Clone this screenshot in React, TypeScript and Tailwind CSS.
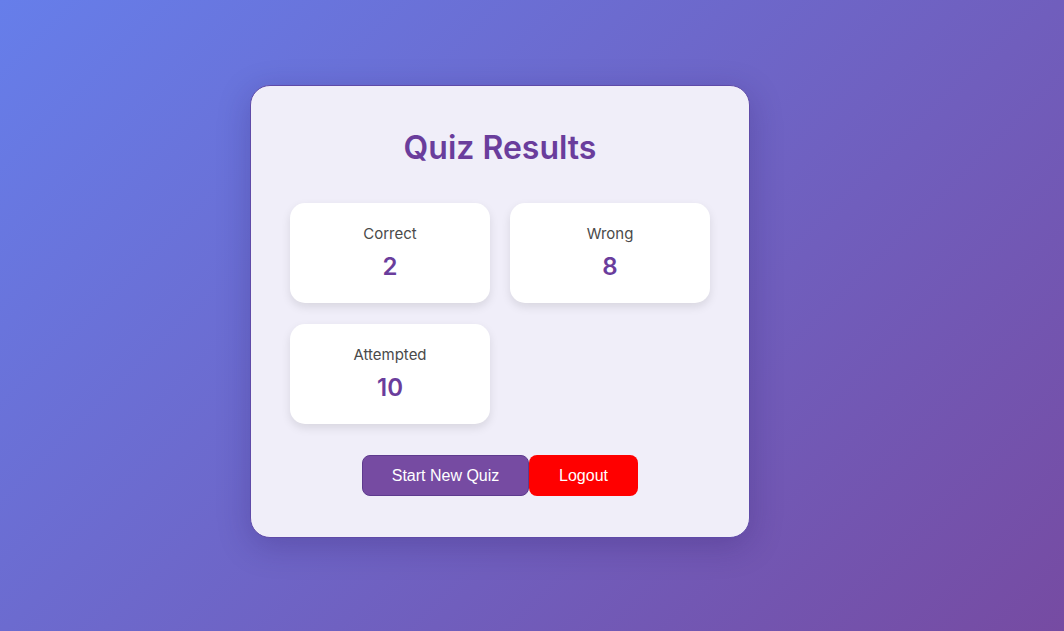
import React from "react";

const stats = [
  { label: "Correct", value: 2 },
  { label: "Wrong", value: 8 },
  { label: "Attempted", value: 10 },
];

export default function App() {
  return (
    <div className="min-h-screen w-full bg-[linear-gradient(135deg,#667eea_0%,#764ba2_100%)] flex justify-center pr-[64px] pt-[85px] font-['Inter',sans-serif]">
      <div className="w-[500px] h-[453px] rounded-[20px] border border-[#5f4aa8] bg-[#f0eef9] shadow-[0_8px_32px_rgba(40,20,90,0.25)] px-[39px] pt-[42px]">
        <h1 className="text-center text-[32px] font-semibold text-[#6a3d9c] leading-[40px]">
          Quiz Results
        </h1>
        <div className="mt-[35px] grid grid-cols-[200px_200px] gap-x-[20px] gap-y-[21px]">
          {stats.map((s) => (
            <div
              key={s.label}
              className="h-[100px] rounded-[15px] bg-white shadow-[0_4px_10px_rgba(0,0,0,0.1)] flex flex-col items-center pt-[21px]"
            >
              <span className="text-[15px] text-[#4a4a4a] leading-[20px]">{s.label}</span>
              <span className="mt-[8px] text-[24px] font-semibold text-[#6a3d9c] leading-[30px]">
                {s.value}
              </span>
            </div>
          ))}
        </div>
        <div className="mt-[31px] flex justify-center font-['Liberation_Sans',Arial,sans-serif]">
          <button className="h-[41px] w-[167px] rounded-[8px] border border-[#5e3a8e] bg-[#764ba2] text-white text-[16px]">
            Start New Quiz
          </button>
          <button className="h-[41px] w-[109px] rounded-[8px] bg-[#ff0000] text-white text-[16px]">
            Logout
          </button>
        </div>
      </div>
    </div>
  );
}
